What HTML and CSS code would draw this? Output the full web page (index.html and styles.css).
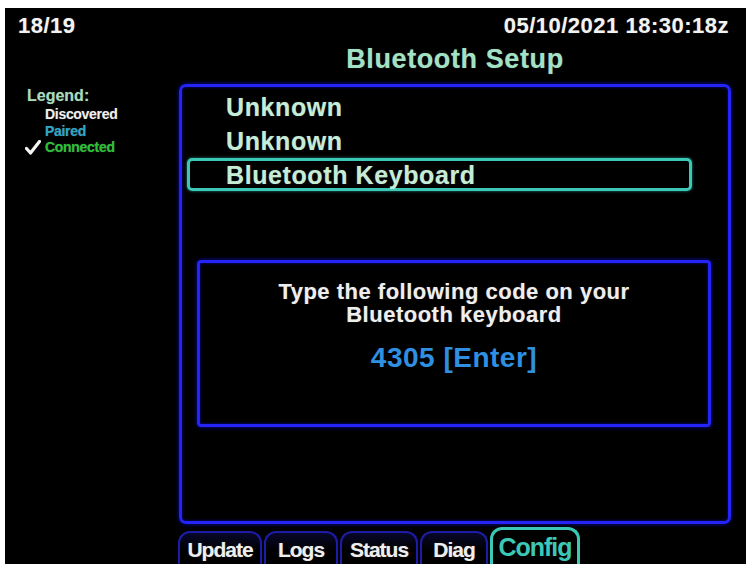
FILE: index.html
```html
<!DOCTYPE html>
<html lang="en">
<head>
  <meta charset="UTF-8">
  <meta name="viewport" content="width=device-width, initial-scale=1">
  <title>Bluetooth Setup</title>
  <link rel="stylesheet" href="styles.css">
</head>
<body>
  <div class="screen">
    <div class="topbar">
      <span>18/19</span>
      <span>05/10/2021 18:30:18z</span>
    </div>

    <div class="layout">
      <h1 class="title">Bluetooth Setup</h1>

      <div class="legend">
        <div class="legend-title">Legend:</div>
        <div class="legend-item discovered"><span class="mark"></span>Discovered</div>
        <div class="legend-item paired"><span class="mark"></span>Paired</div>
        <div class="legend-item connected">
          <span class="mark">
            <svg width="16" height="15" viewBox="0 0 16 15">
              <path d="M1.5 8.5 L5.5 13 L14.5 1.5" fill="none" stroke="#f4f4f4" stroke-width="3.2" stroke-linecap="round" stroke-linejoin="round"/>
            </svg>
          </span>Connected
        </div>
      </div>

      <div class="panel">
        <ul class="devices">
          <li>Unknown</li>
          <li>Unknown</li>
          <li class="selected">Bluetooth Keyboard</li>
        </ul>

        <div class="dialog">
          <p class="dialog-text">Type the following code on your<br>Bluetooth keyboard</p>
          <p class="dialog-code">4305 [Enter]</p>
        </div>
      </div>

      <div class="tabs">
        <div class="tab tab-update">Update</div>
        <div class="tab tab-logs">Logs</div>
        <div class="tab tab-status">Status</div>
        <div class="tab tab-diag">Diag</div>
        <div class="tab tab-config active">Config</div>
      </div>
    </div>
  </div>
</body>
</html>
```

FILE: styles.css
```css
:root {
  --panel-blue: #2424f6;
  --panel-glow: #0a0ab0;
  --tab-blue: #1c1ca6;
  --cyan: #3cc8b6;
  --mint: #c4ecd6;
  --title: #a2e2c4;
  --code-blue: #2f90e2;
}

* {
  box-sizing: border-box;
  font-family: 'Liberation Sans', Arial, sans-serif;
  font-weight: bold;
}

body {
  margin: 0;
  padding: 0;
  background: #ffffff;
}

.screen {
  margin: 8px 2px 0 5px;
  height: 556px;
  background: #000000;
  color: #f2f2f2;
  overflow: hidden;
  text-shadow: 0 0 1px rgba(255, 255, 255, 0.35);
}

.topbar {
  display: flex;
  justify-content: space-between;
  padding: 6px 17px 0 13px;
  font-size: 22px;
  line-height: 24px;
  letter-spacing: 0.5px;
}

.layout {
  display: grid;
  grid-template-columns: 174px 552px;
  grid-template-rows: auto 440px 40px;
}

.title {
  grid-column: 2;
  grid-row: 1;
  margin: 6px 0 10px;
  text-align: center;
  font-size: 27px;
  line-height: 30px;
  letter-spacing: 0.6px;
  color: var(--title);
}

/* legend on the left */
.legend {
  grid-column: 1;
  grid-row: 2;
  padding: 3px 0 0 22px;
}

.legend-title {
  font-size: 16px;
  line-height: 17px;
  color: #a6dcbc;
  margin-bottom: 2px;
}

.legend-item {
  display: flex;
  align-items: center;
  margin-left: -2px;
  font-size: 14px;
  line-height: 16.5px;
  letter-spacing: -0.3px;
}

.legend-item .mark {
  display: inline-flex;
  width: 20px;
}

.discovered { color: #eeeeee; }
.paired { color: #2aa6c6; }
.connected { color: #24c232; }

/* main panel */
.panel {
  grid-column: 2;
  grid-row: 2;
  border: 3px solid var(--panel-blue);
  border-radius: 7px;
  box-shadow: 0 0 4px var(--panel-glow), inset 0 0 3px var(--panel-glow);
  padding-top: 3px;
}

.devices {
  list-style: none;
  margin: 0;
  padding: 0;
}

.devices li {
  height: 34px;
  margin: 0 36px 0 5px;
  padding-left: 36px;
  border: 3px solid transparent;
  border-radius: 5px;
  font-size: 25px;
  line-height: 28px;
  letter-spacing: 0.6px;
  color: var(--mint);
}

.devices li.selected {
  height: 33px;
  border-color: var(--cyan);
  box-shadow: 0 0 3px #1e8c80;
}

.dialog {
  margin: 69px 17px 0 15px;
  height: 167px;
  border: 3px solid var(--panel-blue);
  border-radius: 4px;
  box-shadow: 0 0 4px var(--panel-glow), inset 0 0 3px var(--panel-glow);
  padding-top: 17px;
  text-align: center;
}

.dialog-text {
  margin: 0;
  font-size: 22px;
  line-height: 23px;
  letter-spacing: 0.5px;
  color: #eeeeee;
}

.dialog-code {
  margin: 17px 0 0;
  font-size: 28px;
  line-height: 30px;
  letter-spacing: 0.5px;
  color: var(--code-blue);
  text-shadow: none;
}

/* tab strip */
.tabs {
  grid-column: 2;
  grid-row: 3;
  display: flex;
  align-items: flex-end;
  gap: 2px;
  margin-left: -1px;
}

.tab {
  height: 33px;
  border: 2px solid var(--tab-blue);
  border-bottom: none;
  border-radius: 12px 12px 0 0;
  background: linear-gradient(#07072a, #000000 60%);
  color: #eeeeee;
  font-size: 21px;
  line-height: 34px;
  letter-spacing: -1px;
  text-align: center;
}

.tab-update { width: 84px; }
.tab-logs { width: 74px; }
.tab-status { width: 78px; }
.tab-diag { width: 68px; }

.tab.active {
  width: 90px;
  height: 37px;
  border-color: var(--cyan);
  border-width: 3px;
  background: #000000;
  color: var(--cyan);
  font-size: 25px;
  line-height: 34px;
  text-shadow: none;
}
```
